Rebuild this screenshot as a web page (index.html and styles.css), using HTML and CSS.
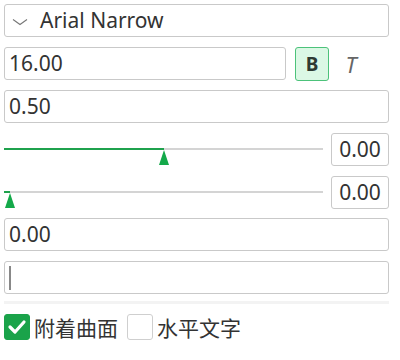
FILE: index.html
```html
<!DOCTYPE html>
<html lang="zh">
<head>
  <meta charset="UTF-8">
  <title>Text Properties</title>
  <link rel="stylesheet" href="styles.css">
</head>
<body>

<div class="panel">
  <div class="field select">
    <svg class="chevron" width="16" height="8" viewBox="0 0 16 8">
      <polyline points="1,1.5 8,6.5 15,1.5" fill="none" stroke="#777" stroke-width="1.1"/>
    </svg>
    <span>Arial Narrow</span>
  </div>

  <div class="row">
    <div class="field grow">16.00</div>
    <div class="btn-bold">B</div>
    <div class="btn-italic">T</div>
  </div>

  <div class="field">0.50</div>

  <div class="row slider-row">
    <div class="slider">
      <div class="track"></div>
      <div class="fill" style="width: 50%"></div>
      <div class="thumb" style="left: 50%"></div>
    </div>
    <div class="field small">0.00</div>
  </div>

  <div class="row slider-row">
    <div class="slider">
      <div class="track"></div>
      <div class="fill" style="width: 2%"></div>
      <div class="thumb" style="left: 2%"></div>
    </div>
    <div class="field small">0.00</div>
  </div>

  <div class="field">0.00</div>

  <div class="field"><span class="caret"></span></div>
</div>

<div class="checks">
  <label class="check">
    <span class="box checked">
      <svg width="20" height="16" viewBox="0 0 20 16">
        <polyline points="3,8 8,13 17,3" fill="none" stroke="#fff" stroke-width="3.2" stroke-linecap="round" stroke-linejoin="round"/>
      </svg>
    </span>
    附着曲面
  </label>
  <label class="check">
    <span class="box"></span>
    水平文字
  </label>
</div>

</body>
</html>
```
FILE: styles.css
```css
* {
  box-sizing: border-box;
}

body {
  margin: 0;
  padding: 4px 11px 0 4px;
  background: #fff;
  color: #333;
  font-family: "Noto Sans", "Noto Sans CJK SC", sans-serif;
  font-size: 21px;
}

.panel {
  display: flex;
  flex-direction: column;
  gap: 9.7px;
  padding-bottom: 7px;
  border-bottom: 3px solid #f3f3f3;
}

.field {
  height: 33px;
  border: 1px solid #c9c9c9;
  border-radius: 3px;
  padding: 0 4px;
  display: flex;
  align-items: center;
  line-height: 1;
  background: #fff;
}

.select {
  padding-left: 7px;
}

.chevron {
  margin-right: 12px;
  margin-top: 2px;
}

.row {
  display: flex;
  align-items: center;
}

.grow {
  flex: 1;
}

.btn-bold {
  width: 34px;
  height: 34px;
  margin-left: 9px;
  border: 1px solid #4cc27a;
  border-radius: 3px;
  background: #dbf8e5;
  color: #2e3a33;
  font-weight: bold;
  font-size: 19px;
  display: flex;
  align-items: center;
  justify-content: center;
}

.btn-italic {
  width: 34px;
  margin-left: 5px;
  margin-right: 21px;
  text-align: center;
  font-style: italic;
  font-size: 22px;
  color: #666;
}

.slider-row {
  gap: 8px;
}

.slider {
  flex: 1;
  position: relative;
  height: 33px;
}

.track {
  position: absolute;
  left: 0;
  right: 0;
  top: 15px;
  height: 2px;
  background: #d4d4d4;
}

.fill {
  position: absolute;
  left: 0;
  top: 15px;
  height: 2px;
  background: #1fa24d;
}

.thumb {
  position: absolute;
  top: 17px;
  width: 0;
  height: 0;
  margin-left: -5px;
  border-left: 5px solid transparent;
  border-right: 5px solid transparent;
  border-bottom: 15px solid #14a94a;
}

.small {
  width: 58px;
  justify-content: center;
  padding: 0;
}

.caret {
  display: block;
  width: 2px;
  height: 24px;
  background: #888;
}

.checks {
  display: flex;
  align-items: center;
  padding-top: 8px;
}

.check {
  display: flex;
  align-items: center;
  gap: 4px;
  margin-right: 9px;
}

.box {
  width: 26px;
  height: 26px;
  border: 1px solid #cfcfcf;
  border-radius: 3px;
  display: flex;
  align-items: center;
  justify-content: center;
}

.box.checked {
  background: #1aa34a;
  border-color: #1aa34a;
}
```
